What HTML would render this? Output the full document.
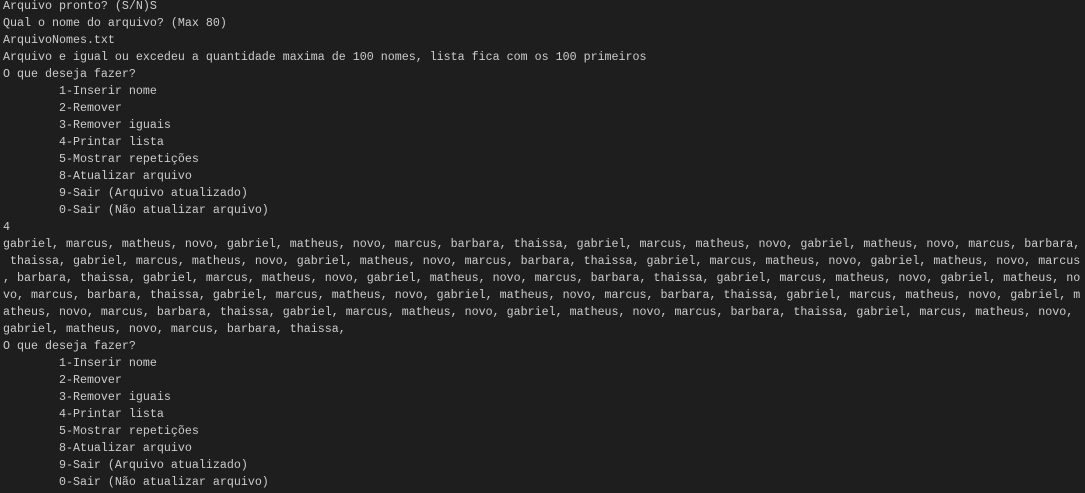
<!DOCTYPE html>
<html><head><meta charset="utf-8"><style>
html,body{margin:0;padding:0;background:#1e1e1e;width:1085px;height:493px;overflow:hidden}
pre{margin:0;position:absolute;left:3px;top:-2px;font-family:"Liberation Mono",monospace;font-size:11.67px;line-height:17px;color:#cccccc;white-space:pre}
</style></head><body><pre>Arquivo pronto? (S/N)S
Qual o nome do arquivo? (Max 80)
ArquivoNomes.txt
Arquivo e igual ou excedeu a quantidade maxima de 100 nomes, lista fica com os 100 primeiros
O que deseja fazer?
        1-Inserir nome
        2-Remover
        3-Remover iguais
        4-Printar lista
        5-Mostrar repetições
        8-Atualizar arquivo
        9-Sair (Arquivo atualizado)
        0-Sair (Não atualizar arquivo)
4
gabriel, marcus, matheus, novo, gabriel, matheus, novo, marcus, barbara, thaissa, gabriel, marcus, matheus, novo, gabriel, matheus, novo, marcus, barbara,
 thaissa, gabriel, marcus, matheus, novo, gabriel, matheus, novo, marcus, barbara, thaissa, gabriel, marcus, matheus, novo, gabriel, matheus, novo, marcus
, barbara, thaissa, gabriel, marcus, matheus, novo, gabriel, matheus, novo, marcus, barbara, thaissa, gabriel, marcus, matheus, novo, gabriel, matheus, no
vo, marcus, barbara, thaissa, gabriel, marcus, matheus, novo, gabriel, matheus, novo, marcus, barbara, thaissa, gabriel, marcus, matheus, novo, gabriel, m
atheus, novo, marcus, barbara, thaissa, gabriel, marcus, matheus, novo, gabriel, matheus, novo, marcus, barbara, thaissa, gabriel, marcus, matheus, novo,
gabriel, matheus, novo, marcus, barbara, thaissa,
O que deseja fazer?
        1-Inserir nome
        2-Remover
        3-Remover iguais
        4-Printar lista
        5-Mostrar repetições
        8-Atualizar arquivo
        9-Sair (Arquivo atualizado)
        0-Sair (Não atualizar arquivo)</pre></body></html>
